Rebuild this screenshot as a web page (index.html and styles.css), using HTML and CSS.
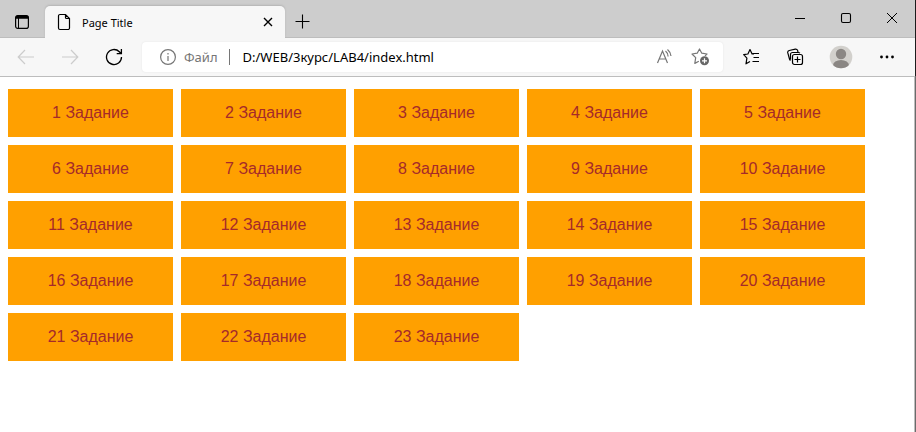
FILE: index.html
```html
<!DOCTYPE html>
<html lang="ru">
<head>
<meta charset="utf-8">
<title>Page Title</title>
<link rel="stylesheet" href="styles.css">
</head>
<body>
<div class="window">
  <header class="titlebar">
    <button class="tab-menu" aria-label="Tab actions">
      <svg width="16" height="16" viewBox="0 0 16 16"><rect x="1.6" y="1.6" width="12.8" height="12.8" rx="2.2" fill="none" stroke="#000" stroke-width="1.2"/><path d="M1.5 4.8V3.5a2 2 0 0 1 2-2h9a2 2 0 0 1 2 2v1.3z" fill="#000"/><path d="M4.5 4v10.500" stroke="#000"/></svg>
    </button>
    <div class="tab">
      <svg width="14" height="18" viewBox="0 0 14 18" fill="none" stroke="#000" stroke-width="1.2"><path d="M3 1.500h5.500l4 4V15a1.500 1.500 0 0 1-1.500 1.500H3A1.500 1.500 0 0 1 1.500 15V3A1.500 1.500 0 0 1 3 1.500zM8.500 1.500V4.500a1 1 0 0 0 1 1h3"/></svg>
      <span class="tab-title">Page Title</span>
      <button class="tab-close" aria-label="Close tab">
        <svg width="10" height="10" viewBox="0 0 10 10" stroke="#000" stroke-width="1.4"><path d="M1 1l8 8M9 1l-8 8"/></svg>
      </button>
    </div>
    <button class="new-tab" aria-label="New tab">
      <svg width="15" height="15" viewBox="0 0 15 15" stroke="#000" stroke-width="1.1"><path d="M7.500 .5v14M.5 7.500h14"/></svg>
    </button>
    <div class="window-controls">
      <button aria-label="Minimize"><svg width="12" height="12" viewBox="0 0 12 12" stroke="#000"><path d="M1 6.500h10"/></svg></button>
      <button aria-label="Maximize"><svg width="12" height="12" viewBox="0 0 12 12" fill="none" stroke="#000" stroke-width="1.1"><rect x="1.500" y="1.500" width="9" height="9" rx="1.500"/></svg></button>
      <button aria-label="Close"><svg width="12" height="12" viewBox="0 0 12 12" stroke="#000"><path d="M1 1l10 10M11 1L1 11"/></svg></button>
    </div>
  </header>

  <nav class="toolbar">
    <button aria-label="Back"><svg width="18" height="16" viewBox="0 0 18 16" fill="none" stroke="#ccc" stroke-width="1.200"><path d="M17 8H1.500M8 1L1.200 8 8 15"/></svg></button>
    <button aria-label="Forward"><svg width="18" height="16" viewBox="0 0 18 16" fill="none" stroke="#ccc" stroke-width="1.200"><path d="M1 8h15.500M10 1l6.800 7L10 15"/></svg></button>
    <button aria-label="Refresh"><svg width="18" height="18" viewBox="0 0 18 18" fill="none" stroke="#000" stroke-width="1.300"><path d="M16.500 9a7.500 7.500 0 1 1-2.200-5.300l1.700 1.800M16.400 1v4.700h-4.700"/></svg></button>
    <form class="address">
      <svg width="18" height="18" viewBox="0 0 18 18" fill="none" stroke="#767676" stroke-width="1.200"><circle cx="9" cy="9" r="7.400"/><path d="M9 8v5M9 5v1.500"/></svg>
      <label class="scheme" for="url">Файл</label>
      <input id="url" type="text" value="D:/WEB/3курс/LAB4/index.html">
      <button type="button" class="address-action" aria-label="Read aloud">
        <svg width="18" height="18" viewBox="0 0 18 18" fill="none" stroke="#767676" stroke-width="1.200"><path d="M2.500 15L7.500 3l5 12M4.300 11h6.400M10.500 3a7 7 0 0 1 2.600 5.500M12.500 1.500a10 10 0 0 1 3.500 6.500"/></svg>
      </button>
      <button type="button" class="address-action" aria-label="Add to favorites">
        <svg width="20" height="18" viewBox="0 0 20 18"><path d="M15 7.900l2-1.900-5.200-.8L9.500 1 7.200 5.200l-5.200.8 3.700 3.700-.9 5.700 4-2.200" fill="none" stroke="#767676" stroke-width="1.200" stroke-linejoin="round"/><circle cx="14.500" cy="12.800" r="4.500" fill="#666"/><path d="M14.500 10.300v5M12 12.800h5" stroke="#fff" stroke-width="1.200"/></svg>
      </button>
    </form>
    <div class="browser-actions">
      <button aria-label="Favorites"><svg width="18" height="18" viewBox="0 0 18 18" fill="none" stroke="#000" stroke-width="1.200" stroke-linejoin="round"><path d="M11 6H9.100L7 1.500 4.900 6l-4.200.6 3.200 3.500-.9 5.700L7 13.400M9.500 5.500H16M10.500 9.500H16M9.500 13.500H16"/></svg></button>
      <button aria-label="Collections"><svg width="18" height="18" viewBox="0 0 18 18" fill="none" stroke="#000" stroke-width="1.200"><rect x="5.500" y="6.500" width="10" height="10" rx="2"/><path d="M10.500 8.500v6M7.500 11.500h6M3.500 12.500a2 2 0 0 1-1-1.400L.8 4.900a2 2 0 0 1 1.400-2.400l6.100-1.300a2 2 0 0 1 2.400 1.500l.2 1.300M3.500 11.500v-5a2 2 0 0 1 2-2h6a2 2 0 0 1 1.400.6"/></svg></button>
    </div>
    <div class="account-actions">
      <button aria-label="Profile"><svg width="24" height="24" viewBox="0 0 24 24"><defs><clipPath id="avatar"><circle cx="12" cy="12" r="11.300"/></clipPath></defs><circle cx="12" cy="12" r="11.300" fill="#d2d0cc"/><g clip-path="url(#avatar)" fill="#8a8683"><circle cx="12" cy="9" r="5.200"/><ellipse cx="12" cy="20.500" rx="8" ry="5.500"/></g></svg></button>
      <button aria-label="Settings and more"><svg width="16" height="4" viewBox="0 0 16 4"><circle cx="2.500" cy="2" r="1.400"/><circle cx="8" cy="2" r="1.400"/><circle cx="13.500" cy="2" r="1.400"/></svg></button>
    </div>
  </nav>
  <main class="page">
    <a href="#">1 Задание</a>
    <a href="#">2 Задание</a>
    <a href="#">3 Задание</a>
    <a href="#">4 Задание</a>
    <a href="#">5 Задание</a>
    <a href="#">6 Задание</a>
    <a href="#">7 Задание</a>
    <a href="#">8 Задание</a>
    <a href="#">9 Задание</a>
    <a href="#">10 Задание</a>
    <a href="#">11 Задание</a>
    <a href="#">12 Задание</a>
    <a href="#">13 Задание</a>
    <a href="#">14 Задание</a>
    <a href="#">15 Задание</a>
    <a href="#">16 Задание</a>
    <a href="#">17 Задание</a>
    <a href="#">18 Задание</a>
    <a href="#">19 Задание</a>
    <a href="#">20 Задание</a>
    <a href="#">21 Задание</a>
    <a href="#">22 Задание</a>
    <a href="#">23 Задание</a>
  </main>
</div>
</body>
</html>
```
FILE: styles.css
```css
* {
  box-sizing: border-box;
}

body {
  margin: 0;
  background: #fff;
  font-family: "Noto Sans", "Open Sans", sans-serif;
  font-size: 13px;
  color: #000;
}

button {
  display: flex;
  align-items: center;
  justify-content: center;
  padding: 0;
  border: 0;
  background: none;
}

svg {
  display: block;
  flex: none;
}

.window {
  display: flex;
  flex-direction: column;
  min-height: 100vh;
}

.titlebar {
  display: flex;
  height: 38px;
  background: #cdcdcd;
  border-right: 1px solid #1c1c1c;
  box-shadow: inset 0 -1px #bdbdbd;
}

.tab-menu {
  width: 28px;
  height: 32px;
  margin: 6px 9px 0 8px;
}

.tab {
  display: flex;
  align-items: center;
  width: 240px;
  margin-top: 6px;
  padding: 0 12px;
  border-radius: 5px 5px 0 0;
  background: #f7f7f7;
  box-shadow: 0 -1px 2px #b4b4b4;
  clip-path: inset(-3px -3px 0);
}

.tab-title {
  flex: 1;
  margin-left: 11px;
  font-size: 11px;
}

.tab-close {
  width: 10px;
  height: 24px;
}

.new-tab {
  width: 34px;
  height: 31px;
  margin-top: 6px;
}

.window-controls {
  display: flex;
  margin-left: auto;
}

.window-controls button {
  width: 46px;
  height: 36px;
}

.toolbar {
  display: flex;
  align-items: center;
  height: 39px;
  padding: 0 5px 0 4px;
  background: #f7f7f7;
  border-right: 1px solid #1c1c1c;
  border-bottom: 1px solid #bdbdbd;
}

.toolbar button {
  width: 44px;
  height: 32px;
}

.address {
  display: flex;
  flex: 1;
  align-items: center;
  min-width: 0;
  height: 30px;
  margin: 0 7px 0 6px;
  padding: 0 5px 0 17px;
  border-radius: 4px;
  background: #fff;
  box-shadow: 0 0 2px #e2e2e2;
}

.scheme {
  margin-left: 7px;
  padding-right: 11px;
  border-right: 1px solid #767676;
  line-height: 16px;
  color: #767676;
}

.address input {
  flex: 1;
  min-width: 0;
  padding: 0 0 0 13px;
  border: 0;
  outline: 0;
  background: none;
  font: inherit;
  color: #000;
}

.toolbar .address-action {
  width: 36px;
}

.browser-actions,
.account-actions {
  display: flex;
}

.account-actions button {
  width: 46px;
}

.page {
  flex: 1;
  display: grid;
  grid-template-columns: repeat(auto-fill, 165px);
  grid-auto-rows: 48px;
  gap: 8px;
  padding: 12px 8px;
  border-right: 1px solid #6b6b6b;
  box-shadow: inset -1px 0 #bdbdbd;
}

.page a {
  display: flex;
  align-items: center;
  justify-content: center;
  background: #ffa000;
  color: brown;
  font: 16px "Liberation Sans", Arial, sans-serif;
  text-decoration: none;
}
```
